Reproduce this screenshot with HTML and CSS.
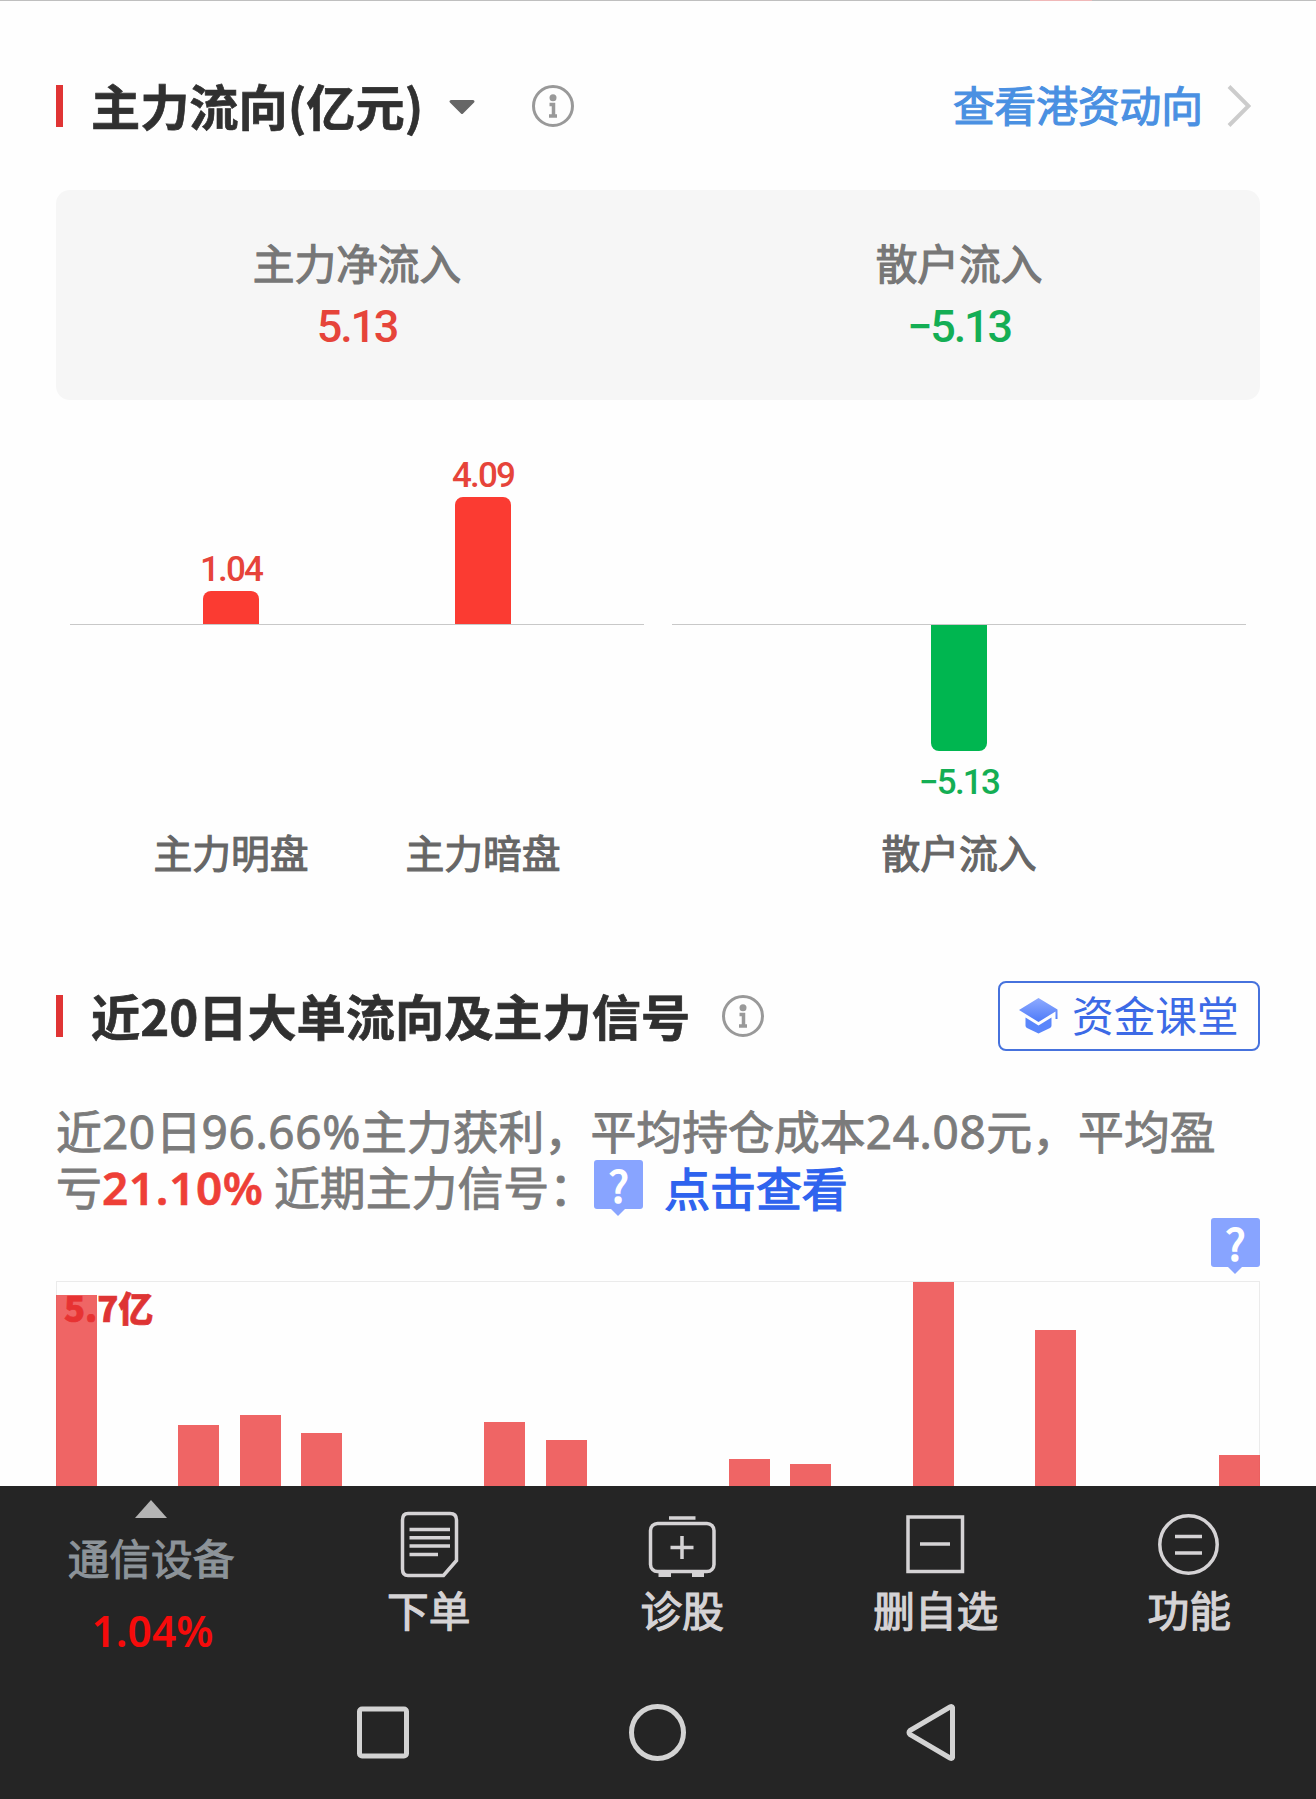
FILE: index.html
```html
<!DOCTYPE html>
<html lang="zh-CN">
<head>
    <meta charset="UTF-8">
    <title>主力流向</title>
    <link rel="stylesheet" href="styles.css">
</head>
<body>
<div id="content">
    <div class="top-line"><div class="top-mark"></div></div>
    <div class="header">
        <div class="mark"></div>
        <h2>主力流向(亿元)</h2>
        <svg class="caret" width="28" height="16" viewBox="0 0 28 16"><path d="M3 2.5H25L14 13.500Z" fill="#666" stroke="#666" stroke-width="3" stroke-linejoin="round"/></svg>
        <svg class="info" width="42" height="42" viewBox="0 0 42 42"><circle cx="21" cy="21" r="19.500" fill="none" stroke="#999" stroke-width="3"/><circle cx="21" cy="12.700" r="3.500" fill="#999"/><path d="M17.500 19.500H21.500V31M17 31H25" fill="none" stroke="#999" stroke-width="3.500"/></svg>
        <a class="more">查看港资动向</a>
        <svg class="chevron" width="24" height="42" viewBox="0 0 24 42"><path d="M2 1.500L21.500 21L2 40.500" fill="none" stroke="#ccc" stroke-width="4"/></svg>
    </div>
    <div class="summary">
        <div class="summary-item">
            <div class="summary-name">主力净流入</div>
            <div class="summary-value red">5.13</div>
        </div>
        <div class="summary-item">
            <div class="summary-name">散户流入</div>
            <div class="summary-value green">−5.13</div>
        </div>
    </div>
    <div class="flow">
        <div class="flow-half">
            <div class="flow-up">
                <div class="flow-col"><span class="red">1.04</span><div class="up-bar" style="height:33px"></div></div>
                <div class="flow-col"><span class="red">4.09</span><div class="up-bar" style="height:127px"></div></div>
            </div>
            <div class="flow-down"></div>
            <div class="flow-names"><div>主力明盘</div><div>主力暗盘</div></div>
        </div>
        <div class="flow-half">
            <div class="flow-up"></div>
            <div class="flow-down">
                <div class="flow-col"><div class="down-bar" style="height:126px"></div><span class="green">−5.13</span></div>
            </div>
            <div class="flow-names"><div>散户流入</div></div>
        </div>
    </div>
    <div class="header">
        <div class="mark"></div>
        <h2>近20日大单流向及主力信号</h2>
        <svg class="info second" width="42" height="42" viewBox="0 0 42 42"><circle cx="21" cy="21" r="19.500" fill="none" stroke="#999" stroke-width="3"/><circle cx="21" cy="12.700" r="3.500" fill="#999"/><path d="M17.500 19.500H21.500V31M17 31H25" fill="none" stroke="#999" stroke-width="3.500"/></svg>
        <a class="lesson">
            <svg width="40" height="36" viewBox="0 0 40 36">
                <defs><linearGradient id="cap" x1="0" y1="0" x2="0" y2="1"><stop offset="0" stop-color="#8fabff"/><stop offset="1" stop-color="#4d7af8"/></linearGradient></defs>
                <path d="M19.500 0L38.500 11.500V21H36.500V13.500L19.500 24L0 12Z" fill="url(#cap)"/>
                <path d="M6.500 19.500L19.500 27.500L32.500 19.500V27.500Q32.500 29 31 30L19.500 35.500L8 30Q6.500 29 6.500 27.500Z" fill="#5a86fb"/>
            </svg>
            <span>资金课堂</span>
        </a>
    </div>
    <p class="desc">近<span class="num">20</span>日<span class="num">96.66%</span>主力获利，平均持仓成本<span class="num">24.08</span>元，平均盈<br>亏<b class="num">21.10%</b> 近期主力信号：<span class="help">?</span><a class="look">点击查看</a></p>
    <div class="help-row"><span class="help">?</span></div>
    <div class="days">
        <div class="days-max">5.7亿</div>
        <div class="day" style="height:191px"></div>
        <div class="day"></div>
        <div class="day" style="height:61px"></div>
        <div class="day" style="height:71px"></div>
        <div class="day" style="height:53px"></div>
        <div class="day"></div>
        <div class="day"></div>
        <div class="day" style="height:64px"></div>
        <div class="day" style="height:46px"></div>
        <div class="day"></div>
        <div class="day"></div>
        <div class="day" style="height:27px"></div>
        <div class="day" style="height:22px"></div>
        <div class="day"></div>
        <div class="day" style="height:204px"></div>
        <div class="day"></div>
        <div class="day" style="height:156px"></div>
        <div class="day"></div>
        <div class="day"></div>
        <div class="day" style="height:31px"></div>
    </div>
</div>
<div id="footer">
    <div class="tabs">
        <div class="board">
            <svg width="32" height="18" viewBox="0 0 32 18"><path d="M16 0L32 18H0Z" fill="#b4b4b4"/></svg>
            <div class="board-name">通信设备</div>
            <div class="board-value"><span class="num">1.04%</span></div>
        </div>
        <div class="tab">
            <svg width="70" height="70" viewBox="0 0 70 70"><path d="M14 4.500H56Q62.500 4.500 62.500 11V51.500L49.500 66.500H14Q8.500 66.500 8.500 60V11Q8.500 4.500 14 4.500Z"/><path d="M15.500 20.500H56M15.500 28.700H56M15.500 37H56M15.500 45.500H44"/></svg>
            <span>下单</span>
        </div>
        <div class="tab">
            <svg width="70" height="70" viewBox="0 0 70 70"><rect x="3.500" y="14.500" width="63.500" height="48" rx="7"/><path d="M22 9H48.500"/><path d="M23.500 38.500H46.500M35 27V50"/><path d="M11.500 65.500H24M45 65.500H57" stroke-width="5"/></svg>
            <span>诊股</span>
        </div>
        <div class="tab">
            <svg width="70" height="70" viewBox="0 0 70 70"><rect x="7" y="8" width="54.500" height="54.500"/><path d="M19 35H49"/></svg>
            <span>删自选</span>
        </div>
        <div class="tab">
            <svg width="70" height="70" viewBox="0 0 70 70"><circle cx="34.500" cy="35.500" r="28.700"/><path d="M21 27.500H48M21 44H48"/></svg>
            <span>功能</span>
        </div>
    </div>
    <div class="nav">
        <svg width="52" height="57" viewBox="0 0 52 57"><rect x="2.500" y="5" width="47" height="47" rx="2.500"/></svg>
        <svg width="57" height="57" viewBox="0 0 57 57"><circle cx="28.500" cy="28.500" r="26"/></svg>
        <svg width="49" height="57" viewBox="0 0 49 57"><path d="M46.500 3.500V53.500Q46 55 44 54L4 30.500Q2 28.500 4 26.500L44 3Q46 2 46.500 3.500Z"/></svg>
    </div>
</div>
</body>
</html>
```
FILE: styles.css
```css
html, body{
    margin:0px;
    padding:0px;
}
body{
    width:1316px;
    height:1799px;
    overflow:hidden;
    display:flex;
    flex-direction:column;
    background-color:#fefefe;
    font-family:"Noto Sans CJK SC", sans-serif;
}
svg{
    display:block;
    flex-shrink:0;
}
.num{
    font-family:"Noto Sans", sans-serif;
}
#content{
    height:1486px;
    overflow:hidden;
}
.top-line{
    height:1px;
    background-color:#bfbfbf;
}
.top-mark{
    width:62px;
    height:1px;
    margin-left:1030px;
    background-color:#f0b8b8;
}
.header{
    display:flex;
    align-items:center;
    height:70px;
    margin:70px 56px 0px;
}
.mark{
    width:7px;
    height:42px;
    background-color:#e03434;
}
h2{
    margin:0px 0px 0px 28px;
    padding-bottom:3px;
    font-size:49.200px;
    line-height:66px;
    font-weight:bold;
    color:#303030;
    white-space:nowrap;
    -webkit-text-stroke:0.700px #303030;
}
.caret{
    margin-left:25px;
    margin-top:1px;
}
.info{
    margin-left:56px;
}
.info.second{
    margin-left:32px;
}
.more{
    margin-left:auto;
    padding-bottom:4px;
    font-size:41.700px;
    line-height:60px;
    color:#4a90e2;
    -webkit-text-stroke:1.200px #4a90e2;
}
.chevron{
    margin:0px 9px 0px 24px;
}
.summary{
    display:flex;
    height:168px;
    margin:49px 56px 0px;
    padding-top:42px;
    border-radius:14px;
    background-color:#f6f6f6;
}
.summary-item{
    flex:1;
    text-align:center;
    line-height:61px;
}
.summary-name{
    font-size:41.700px;
    color:#777;
    -webkit-text-stroke:1.200px #777;
}
.summary-value{
    padding-top:3px;
    font-family:Roboto, sans-serif;
    font-size:45px;
    font-weight:500;
    letter-spacing:-2.200px;
}
.red{
    color:#e6443a;
}
.green{
    color:#14ae54;
}
.flow{
    display:flex;
    gap:28px;
    margin:0px 70px;
}
.flow-half{
    flex:1;
}
.flow-up{
    display:flex;
    justify-content:center;
    align-items:flex-end;
    height:224px;
    border-bottom:1px solid #c8c8c8;
}
.flow-down{
    display:flex;
    justify-content:center;
    height:196px;
}
.flow-col{
    display:flex;
    flex-direction:column;
    align-items:center;
    width:252px;
    font-family:Roboto, sans-serif;
    font-size:35px;
    line-height:42px;
    font-weight:500;
    letter-spacing:-1.800px;
}
.up-bar{
    width:56px;
    border-radius:8px 8px 0px 0px;
    background-color:#fb3b32;
}
.down-bar{
    width:56px;
    border-radius:0px 0px 8px 8px;
    background-color:#00b650;
}
.flow-down span{
    line-height:64px;
}
.flow-names{
    display:flex;
    justify-content:center;
    font-size:38.800px;
    line-height:60px;
    color:#666;
    -webkit-text-stroke:1.100px #666;
}
.flow-names div{
    width:252px;
    text-align:center;
}
.flow + .header{
    margin-top:100px;
}
.lesson{
    display:flex;
    align-items:center;
    box-sizing:border-box;
    width:262px;
    height:70px;
    margin-left:auto;
    padding-left:19px;
    border:2px solid #4672dd;
    border-radius:8px;
    font-size:41.700px;
    line-height:60px;
    color:#3c6ae6;
}
.lesson span{
    margin-left:13px;
    padding-bottom:4px;
}
.desc{
    height:108px;
    margin:51px 56px 0px;
    font-size:45.900px;
    line-height:54px;
    color:#7b7b7b;
    white-space:nowrap;
    -webkit-text-stroke:0.900px #7b7b7b;
}
.desc .num{
    letter-spacing:0.650px;
}
.desc b{
    font-weight:600;
    letter-spacing:0.400px;
    color:#ee3f37;
    -webkit-text-stroke:0.600px #ee3f37;
}
.help{
    position:relative;
    display:inline-block;
    width:49px;
    height:49px;
    border-radius:3px;
    background-color:#88a4ff;
    color:#fff;
    font-size:43px;
    line-height:47px;
    text-align:center;
    vertical-align:top;
    -webkit-text-stroke:1.500px #fff;
}
.desc .help{
    margin:2px 0px -6px -1px;
}
/* tip of the bubble */
.help::after{
    content:"";
    position:absolute;
    left:17px;
    top:49px;
    border:7px solid transparent;
    border-top-color:#88a4ff;
    border-bottom:none;
}
.look{
    display:inline-block;
    margin:0px 0px -6px 21px;
    padding-top:1px;
    vertical-align:top;
    color:#2f63ee;
    -webkit-text-stroke:1.400px #2f63ee;
}
.help-row{
    display:flex;
    justify-content:flex-end;
    height:55px;
    margin:8px 56px;
}
.days{
    position:relative;
    display:flex;
    justify-content:space-between;
    align-items:flex-end;
    height:205px;
    margin:0px 56px;
    box-shadow:inset 0px 1px #ebebeb, inset 1px 0px #ebebeb, inset -1px 0px #ebebeb;
}
.day{
    position:relative;
    width:41px;
    background-color:rgba(234,50,50,.75);
}
.days-max{
    position:absolute;
    left:8px;
    top:1px;
    font-size:34.700px;
    line-height:50px;
    font-weight:900;
    color:#de3434;
    -webkit-text-stroke:0.700px #de3434;
}
#footer{
    height:313px;
    background-color:#252525;
}
.tabs{
    display:flex;
    height:195px;
}
.board{
    display:flex;
    flex-direction:column;
    align-items:center;
    width:302px;
    padding-top:14px;
}
.board-name{
    margin-top:9px;
    font-size:41.700px;
    line-height:60px;
    color:#8c9399;
    -webkit-text-stroke:1.100px #8c9399;
}
.board-value{
    margin-top:11px;
    padding-left:3px;
    font-size:42.500px;
    line-height:62px;
    font-weight:600;
    color:#f60b0b;
}
.tab{
    flex:1;
    display:flex;
    flex-direction:column;
    align-items:center;
    padding-top:23px;
    font-size:41.700px;
    line-height:60px;
    color:#d5d3d5;
}
.tab svg{
    fill:none;
    stroke:#d5d3d5;
    stroke-width:3.500;
}
.tab span{
    -webkit-text-stroke:1.200px #d5d3d5;
}
.nav{
    display:flex;
    justify-content:center;
    gap:220px;
    padding:23px 4px 0px 0px;
}
.nav svg{
    fill:none;
    stroke:#d3d3d3;
    stroke-width:5;
}
```
